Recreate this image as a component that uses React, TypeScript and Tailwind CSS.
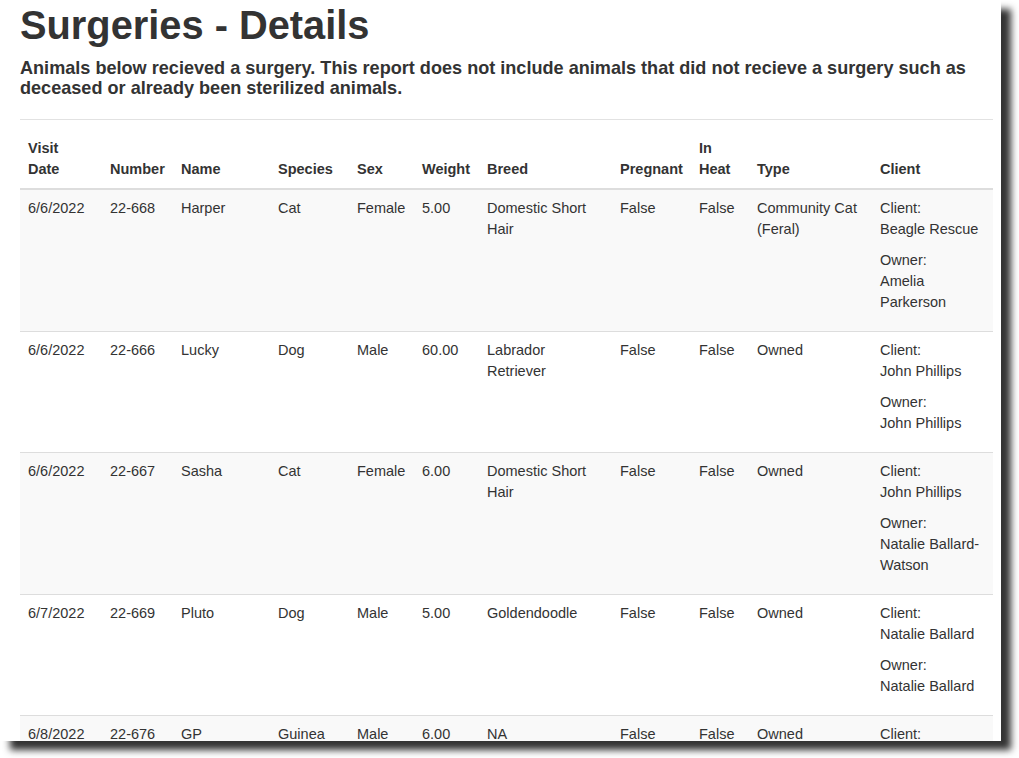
import React from "react";

type Surgery = {
  date: string;
  number: string;
  name: string;
  species: string;
  sex: string;
  weight: string;
  breed: string;
  pregnant: string;
  inHeat: string;
  type: string;
  client: string;
  owner: string;
};

const surgeries: Surgery[] = [
  {
    date: "6/6/2022",
    number: "22-668",
    name: "Harper",
    species: "Cat",
    sex: "Female",
    weight: "5.00",
    breed: "Domestic Short Hair",
    pregnant: "False",
    inHeat: "False",
    type: "Community Cat (Feral)",
    client: "Beagle Rescue",
    owner: "Amelia Parkerson",
  },
  {
    date: "6/6/2022",
    number: "22-666",
    name: "Lucky",
    species: "Dog",
    sex: "Male",
    weight: "60.00",
    breed: "Labrador Retriever",
    pregnant: "False",
    inHeat: "False",
    type: "Owned",
    client: "John Phillips",
    owner: "John Phillips",
  },
  {
    date: "6/6/2022",
    number: "22-667",
    name: "Sasha",
    species: "Cat",
    sex: "Female",
    weight: "6.00",
    breed: "Domestic Short Hair",
    pregnant: "False",
    inHeat: "False",
    type: "Owned",
    client: "John Phillips",
    owner: "Natalie Ballard-Watson",
  },
  {
    date: "6/7/2022",
    number: "22-669",
    name: "Pluto",
    species: "Dog",
    sex: "Male",
    weight: "5.00",
    breed: "Goldendoodle",
    pregnant: "False",
    inHeat: "False",
    type: "Owned",
    client: "Natalie Ballard",
    owner: "Natalie Ballard",
  },
  {
    date: "6/8/2022",
    number: "22-676",
    name: "GP",
    species: "Guinea Pig",
    sex: "Male",
    weight: "6.00",
    breed: "NA",
    pregnant: "False",
    inHeat: "False",
    type: "Owned",
    client: "Natalie Ballard",
    owner: "Natalie Ballard",
  },
];

const th = "px-[8px] py-[8px] text-left align-bottom font-bold";
const td = "px-[8px] py-[8px] align-top";

export default function App() {
  return (
    <div className="min-h-screen bg-white">
      <div
        className="h-[741px] w-[1001px] overflow-hidden bg-white pl-[20px] pr-[8px] text-[#333] shadow-[10px_9px_7px_rgba(0,0,0,0.8)]"
        style={{ fontFamily: '"Liberation Sans", Arial, Helvetica, sans-serif' }}
      >
        {/* Heading */}
        <h1 className="pt-[3px] text-[39.8px] font-bold leading-[44px]">
          Surgeries - Details
        </h1>
        <h4 className="mt-[11px] pr-[12px] text-[18.1px] font-bold leading-[20px]">
          Animals below recieved a surgery. This report does not include animals
          that did not recieve a surgery such as deceased or already been
          sterilized animals.
        </h4>
        <hr className="mt-[21px] border-t border-[#e2e2e2]" />

        {/* Report table */}
        <table className="mt-[10px] w-[973px] table-fixed border-collapse text-[14.5px] leading-[21px]">
          <colgroup>
            <col className="w-[82px]" />
            <col className="w-[71px]" />
            <col className="w-[97px]" />
            <col className="w-[79px]" />
            <col className="w-[65px]" />
            <col className="w-[65px]" />
            <col className="w-[133px]" />
            <col className="w-[79px]" />
            <col className="w-[58px]" />
            <col className="w-[123px]" />
            <col className="w-[121px]" />
          </colgroup>
          <thead>
            <tr className="border-b-2 border-[#ddd]">
              <th className={th}>
                Visit
                <br />
                Date
              </th>
              <th className={th}>Number</th>
              <th className={th}>Name</th>
              <th className={th}>Species</th>
              <th className={th}>Sex</th>
              <th className={th}>Weight</th>
              <th className={th}>Breed</th>
              <th className={th}>Pregnant</th>
              <th className={th}>
                In
                <br />
                Heat
              </th>
              <th className={th}>Type</th>
              <th className={th}>Client</th>
            </tr>
          </thead>
          <tbody>
            {surgeries.map((s, i) => (
              <tr
                key={s.number}
                className={`border-t border-[#ddd] ${i % 2 === 0 ? "bg-[#f9f9f9]" : "bg-white"}`}
              >
                <td className={td}>{s.date}</td>
                <td className={td}>{s.number}</td>
                <td className={td}>{s.name}</td>
                <td className={td}>{s.species}</td>
                <td className={td}>{s.sex}</td>
                <td className={td}>{s.weight}</td>
                <td className={td}>{s.breed}</td>
                <td className={td}>{s.pregnant}</td>
                <td className={td}>{s.inHeat}</td>
                <td className={td}>{s.type}</td>
                <td className={td}>
                  <p className="mb-[10px]">
                    Client:
                    <br />
                    {s.client}
                  </p>
                  <p className="mb-[10px]">
                    Owner:
                    <br />
                    {s.owner}
                  </p>
                </td>
              </tr>
            ))}
          </tbody>
        </table>
      </div>
    </div>
  );
}
